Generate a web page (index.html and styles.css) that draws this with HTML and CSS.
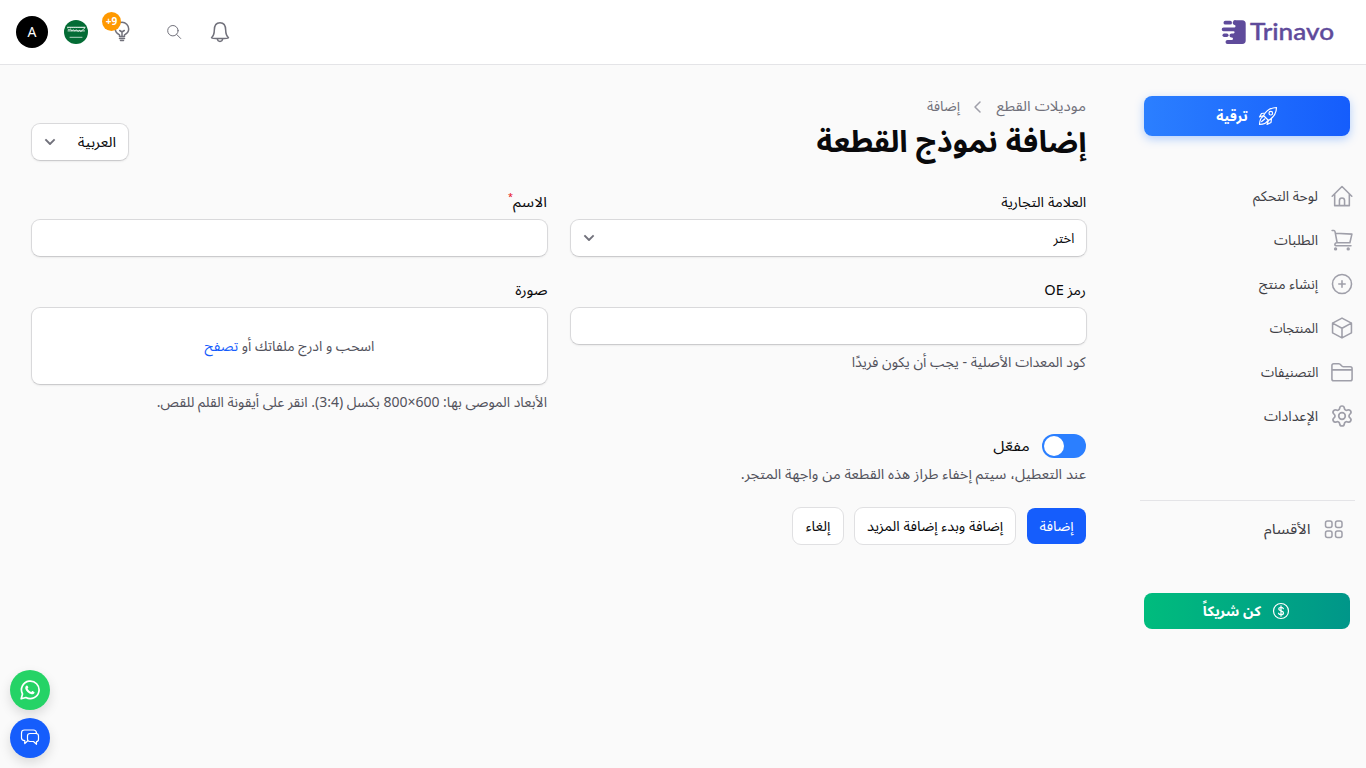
FILE: index.html
```html
<!DOCTYPE html>
<html lang="ar" dir="rtl">
<head>
<meta charset="utf-8">
<title>إضافة نموذج القطعة</title>
<link rel="stylesheet" href="styles.css">
</head>
<body>
<header class="topbar">
  <div class="logo">
    <svg class="logo-mark" width="25" height="25" viewBox="0 0 25 25"><path d="M15 .3h6.200a3.500 3.500 0 0 1 3.500 3.500v16.400a3.700 3.700 0 0 1-3.500 3.800H6.500a2 2 0 0 1 0-4h4.200a1.300 1.300 0 0 0 0-2.600h-.2a2 2 0 0 1 0-4h2a1.100 1.100 0 0 0 0-2.200H2.600a1.900 1.900 0 0 1 0-3.800H13a1.200 1.200 0 0 0 .5-2.400A2.400 2.400 0 0 1 15 .3z"/><rect x="2.500" y=".8" width="8.500" height="3.800" rx="1.900"/><rect x="1.500" y="13.600" width="6" height="3.400" rx="1.700"/></svg>
    <svg class="wordmark" width="86" height="26" viewBox="0 0 86 26"><text x="1" y="21" textLength="84" lengthAdjust="spacingAndGlyphs">Trinavo</text></svg>
  </div>
  <div class="tools">
    <svg class="bell" width="20" height="22" viewBox="0 0 20 22"><path d="M1.500 16.700c2-1.700 2.800-3.700 2.800-7.400C4.300 4.500 6.500 1.700 10 1.700s5.700 2.800 5.700 7.600c0 3.700.8 5.700 2.800 7.400 0 1-17 1-17 0zM7.200 17.500c.3 1.900 1.400 2.900 2.800 2.900s2.500-1 2.800-2.900"/></svg>
    <svg class="search" width="16" height="16" viewBox="0 0 16 16"><circle cx="6.900" cy="6.700" r="5.200"/><path d="m10.700 10.500 4 4"/></svg>
    <div class="tips"><svg width="16" height="22" viewBox="0 0 16 22"><path d="M5.500 15.500v-1.700C3.300 12.700 1.300 10.800 1.300 8a6.700 6.700 0 0 1 13.400 0c0 2.800-2 4.700-4.200 5.800v1.700zM5.500 17.500h5M6.500 19.500h3M8 14.500v-4M5.700 9.500 8 11l2.300-1.500"/></svg><span class="badge" dir="ltr">+9</span></div>
    <svg class="flag" width="24" height="24" viewBox="0 0 24 24"><circle cx="12" cy="12" r="12" fill="#046c35"/><g fill="none" stroke="#fff"><path d="M3.500 7.300h17.500" stroke-width="1" stroke-dasharray="1.500 .6"/><path d="M4 9c1.500 3 2-2 3 .8s2-1.500 3 .5 2-2 3.300.4 2-2 3 .3 1.500-2 4.200-2.500M4 10.900h16.500" stroke-width=".8"/><path d="M6 17.300h12" stroke-width=".7"/></g></svg>
    <div class="avatar">A</div>
  </div>
</header>
<div class="shell">
  <aside class="sidebar">
    <a class="cta upgrade"><svg width="20" height="20" viewBox="0 0 20 20"><path d="M5.500 9.500C8.500 4.500 12.500 1.600 18.500 1.500c-.1 6-3 10-8 13zM7.500 7 3.500 7.500 1.500 11l4-1.500M10.500 14.500 9 18.500l4-2 .5-4M5 10.700c-2 .7-3.200 3-3.500 7.800 4.500-.3 7-1.500 7.800-3.500M3.700 15.500l3-2.500"/><circle cx="12.800" cy="7.200" r="1.800"/></svg><span class="t">ترقية</span></a>
    <nav class="menu">
      <a><svg viewBox="0 0 24 24"><path d="M1.300 12.300 12 1.700l10.700 10.600M4 10v12.500h16V10M9.200 22v-5a2.800 2.800 0 0 1 5.600 0v5"/></svg><span class="t">لوحة التحكم</span></a>
      <a><svg viewBox="0 0 24 24"><path d="M1.200 1.700h2c.8 0 1 .5 1.200 1.200L6.700 15M4.800 4.700l18 .9-2.200 9.400H6.500c-2.700 0-3 3.300-1 3.300h16.300"/><circle cx="5" cy="21.700" r="1"/><circle cx="18.800" cy="21.700" r="1"/></svg><span class="t">الطلبات</span></a>
      <a><svg viewBox="0 0 24 24"><circle cx="12" cy="12" r="10.400"/><path d="M12 8.500v7M8.500 12h7"/></svg><span class="t">إنشاء منتج</span></a>
      <a><svg viewBox="0 0 24 24"><path d="m12 1.200 10.300 5.500v10.600L12 22.800 1.700 17.300V6.700zM1.700 6.700 12 12.300l10.300-5.600M12 12.300v10.500"/></svg><span class="t s93">المنتجات</span></a>
      <a><svg viewBox="0 0 24 24"><path d="M1 19.500V5a2 2 0 0 1 2-2h5.500c2.500 0 2.500 3.300 5 3.300h7.500a2 2 0 0 1 2 2v11.200a2 2 0 0 1-2 2H3a2 2 0 0 1-2-2zM1 9.700h22"/></svg><span class="t s95">التصنيفات</span></a>
      <a><svg viewBox="1 1 22 22"><path d="M9.671 4.136a2.340 2.340 0 0 1 4.659 0 2.340 2.340 0 0 0 3.319 1.915 2.340 2.340 0 0 1 2.330 4.033 2.340 2.340 0 0 0 0 3.831 2.340 2.340 0 0 1-2.330 4.033 2.340 2.340 0 0 0-3.319 1.915 2.340 2.340 0 0 1-4.659 0 2.340 2.340 0 0 0-3.320-1.915 2.340 2.340 0 0 1-2.330-4.033 2.340 2.340 0 0 0 0-3.831A2.340 2.340 0 0 1 6.350 6.051a2.340 2.340 0 0 0 3.319-1.915z"/><circle cx="12" cy="12" r="3.300"/></svg><span class="t s102">الإعدادات</span></a>
    </nav>
    <div class="sections"><svg width="20" height="20" viewBox="0 0 20 20"><rect x="1.500" y="1" width="6.500" height="6.500" rx="2"/><rect x="11.500" y="1" width="6.500" height="6.500" rx="2"/><rect x="1.500" y="11" width="6.500" height="6.500" rx="2"/><rect x="11.500" y="11" width="6.500" height="6.500" rx="2"/></svg><span class="t s114">الأقسام</span></div>
    <a class="cta partner"><svg width="18" height="18" viewBox="0 0 18 18"><circle cx="9" cy="9" r="7.500"/><path d="M9 3.800v10.400M11.400 6.700C10.700 4.900 6.700 5 6.700 7.100s4.800 1.500 4.800 3.800-4.400 2.200-5 .3"/></svg><span class="t">كن شريكاً</span></a>
  </aside>
  <main class="content">
    <div class="heading">
      <div>
        <div class="crumbs"><span class="t crumb">موديلات القطع</span><svg width="20" height="20" viewBox="0 0 20 20"><path d="m12 5-5 5 5 5"/></svg><span class="t">إضافة</span></div>
        <h1><span class="t">إضافة نموذج القطعة</span></h1>
      </div>
      <div class="select lang"><span class="t s108">العربية</span><svg width="12" height="8" viewBox="0 0 12 8"><path d="m2 2 4 4 4-4"/></svg></div>
    </div>
    <form class="fields">
      <div class="field"><label><span class="t s104">العلامة التجارية</span></label><div class="select"><span class="t s93">اختر</span><svg width="12" height="8" viewBox="0 0 12 8"><path d="m2 2 4 4 4-4"/></svg></div></div>
      <div class="field"><label><span class="t name">الاسم</span><sup>*</sup></label><div class="box"></div></div>
      <div class="field"><label><span class="t s104">رمز OE</span></label><div class="box"></div><p class="hint"><span class="t s101">كود المعدات الأصلية - يجب أن يكون فريدًا</span></p></div>
      <div class="field"><label><span class="t s108">صورة</span></label><div class="box drop"><span class="t">اسحب و ادرج ملفاتك أو <b>تصفح</b></span></div><p class="hint"><span class="t">الأبعاد الموصى بها: 600×800 بكسل (3:4). انقر على أيقونة القلم للقص.</span></p></div>
    </form>
    <div class="enabled"><i class="switch"></i><span class="t s114">مفعّل</span></div>
    <p class="hint"><span class="t s105">عند التعطيل، سيتم إخفاء طراز هذه القطعة من واجهة المتجر.</span></p>
    <div class="actions"><button class="primary"><span class="t">إضافة</span></button><button class="more"><span class="t">إضافة وبدء إضافة المزيد</span></button><button class="cancel"><span class="t">إلغاء</span></button></div>
  </main>
</div>
<div class="fabs">
  <a class="fab wa"><svg width="20" height="20" viewBox="0 0 20 20"><path d="M1.200 18.800 2.500 14a8.800 8.800 0 1 1 3.400 3.500z" fill="none" stroke="#fff" stroke-width="1.700"/><path d="M6.300 5.700c.5-.5 1.100-.4 1.400.2l.6 1.400c.2.500-.5 1-.7 1.400.8 1.600 2 2.700 3.700 3.300.4-.3.900-1.100 1.300-.9l1.600.8c.5.200.4.700.2 1.100-.5 1.100-1.700 1.400-2.800 1.200-3-.8-5.300-2.900-6.200-5.300-.4-1.300.1-2.500.9-3.200z" fill="#fff" stroke="none"/></svg></a>
  <a class="fab chat"><svg width="20" height="20" viewBox="0 0 20 20"><path d="M7.500 13 4.800 15.500v-2.800C2.500 12.500 1.500 12 1.500 10V5c0-2 1-3 3-3h9c2 0 2.800 1 3 3M10 5.500h6c1.700 0 2.500.8 2.500 2.300v3.400c0 1.500-.8 2.200-2 2.300v2.800l-3-2.800H10c-1.700 0-2.500-.8-2.500-2.300V7.800c0-1.500.8-2.300 2.500-2.300z"/></svg></a>
</div>
</body>
</html>
```
FILE: styles.css
```css
*{box-sizing:border-box}
body{margin:0;height:768px;overflow:hidden;background:#fafafa;color:#09090b;font:14px/20px "Noto Sans Arabic","Noto Kufi Arabic","Liberation Sans","DejaVu Sans",sans-serif}
svg{flex:none;fill:none;stroke:currentColor;stroke-width:1.5;stroke-linecap:round;stroke-linejoin:round}
.t{display:inline-block;white-space:nowrap;--sx:1;--dy:1px;transform:translateY(var(--dy)) scaleX(var(--sx));transform-origin:right center}
.s93{--sx:.93}.s95{--sx:.95}.s101{--sx:1.01}.s102{--sx:1.02}.s104{--sx:1.045}.s105{--sx:1.049}.s108{--sx:1.09}.s114{--sx:1.15}
.topbar{height:65px;background:#fff;border-bottom:1px solid #e4e4e7;display:flex;justify-content:space-between;align-items:center;padding:0 31px 0 16px}
.logo{display:flex;align-items:center;gap:3px;direction:ltr}
.logo-mark{stroke:none;fill:#5f4b9b}
.wordmark{overflow:visible;fill:#5f4b9b;stroke:#5f4b9b;stroke-width:.4;font:500 23px Lato,sans-serif}
.tools{display:flex;align-items:center;color:#71717b}
.search{margin-right:28px;stroke-width:1}
.tips{display:flex;position:relative;margin-right:36px}
.badge{position:absolute;left:-12px;top:-9px;width:19px;height:19px;border-radius:50%;background:#ff9900;color:#fff;font:bold 10px/19px "Open Sans",sans-serif;text-align:center}
.flag{margin:0 26px 0 16px;stroke:none}
.avatar{width:32px;height:32px;border-radius:50%;background:#000;color:#fff;text-align:center;font:14px/32px "Noto Sans",sans-serif}
.shell{display:flex}
.sidebar{width:238px;padding:31px 16px 0 12px;flex:none}
.cta{display:flex;align-items:center;justify-content:center;gap:10px;border-radius:8px;color:#fff;font-weight:700;width:206px}
.upgrade{height:40px;background:linear-gradient(to right,#2b7fff,#155dfc);box-shadow:0 3px 10px rgba(43,127,255,.35)}
.upgrade svg,.partner svg{stroke-width:1.2}
.partner .t{--sx:1.02}
.menu{margin:38px -3px 0 0;display:flex;flex-direction:column}
.menu a{height:44px;display:flex;align-items:center;gap:13px;color:#3f3f46}
.menu svg{width:22px;height:22px;color:#9f9fa9;stroke-width:1.7}
.sections{margin:62px -5px 0 0;padding:19px 11px 0 0;border-top:1px solid #e4e4e7;display:flex;align-items:center;gap:14px;color:#3f3f46}
.sections svg{color:#9f9fa9}
.sections .t{--dy:0px}
.partner{height:36px;margin-top:53px;background:linear-gradient(to right,#00bc7d,#009689)}
.content{flex:1;padding:31px 42px 0 31px}
.heading{display:flex;justify-content:space-between;align-items:flex-end;height:65px}
.crumbs{display:flex;align-items:center;gap:8px;color:#71717b;height:20px}
.crumbs svg{color:#9f9fa9}
.crumbs .t{--dy:0px}
.crumbs .crumb{width:90px;--sx:1.09}
h1{margin:8px 0 0;font-size:30px;line-height:36px;font-weight:700}
h1 .t{--dy:0px;--sx:1.025}
.select,.box{height:38px;background:#fff;border:1px solid #d9d9db;border-bottom-color:#cbcbcd;border-radius:9px;box-shadow:0 1px 2px rgba(0,0,0,.06);display:flex;align-items:center;justify-content:space-between;padding:0 12px}
.select svg{color:#71717b;stroke-width:1.8;stroke-linecap:square}
.lang{width:98px}
.fields{display:grid;grid-template-columns:1fr 1fr;column-gap:22px;row-gap:23px;margin:31px -1px 0 0}
.field label{display:flex;height:20px;margin-bottom:7px;padding-right:1px}
.field{min-width:0}
.field .hint{padding-right:1px}
.name{width:34px;--sx:1.12}
sup{color:#e7000b;font-size:9px;line-height:11px}
.hint{margin:8px 0 0;color:#52525c}
.hint .t{--dy:0px}
.drop{height:78px;justify-content:center;color:#52525c}
.drop b{font-weight:400;color:#155dfc}
.enabled{display:flex;align-items:center;gap:12px;margin-top:21px}
.switch{width:44px;height:24px;border-radius:12px;background:#2b7fff;padding:2px;display:flex;justify-content:flex-end}
.switch::before{content:"";width:20px;height:20px;border-radius:50%;background:#fff}
.enabled+.hint{margin-top:7px}
.actions{display:flex;align-items:center;gap:10px;margin-top:22px}
button{height:38px;border:1px solid #e0e0e2;background:#fff;border-radius:9px;font:inherit;color:inherit;padding:0}
button .t{transform-origin:center;--sx:1.03}
.primary{width:59px;height:36px;border:0;background:#155dfc;color:#fff;border-radius:8px;margin-left:1px}
.more{width:162px}.cancel{width:52px}
.fabs{position:fixed;left:10px;bottom:10px;display:flex;flex-direction:column;gap:8px}
.fab{width:40px;height:40px;border-radius:50%;display:flex;align-items:center;justify-content:center;color:#fff;box-shadow:0 5px 12px rgba(0,0,0,.13)}
.wa{background:#25d366}.chat{background:#155dfc}.chat svg{stroke-width:1.2}
```
